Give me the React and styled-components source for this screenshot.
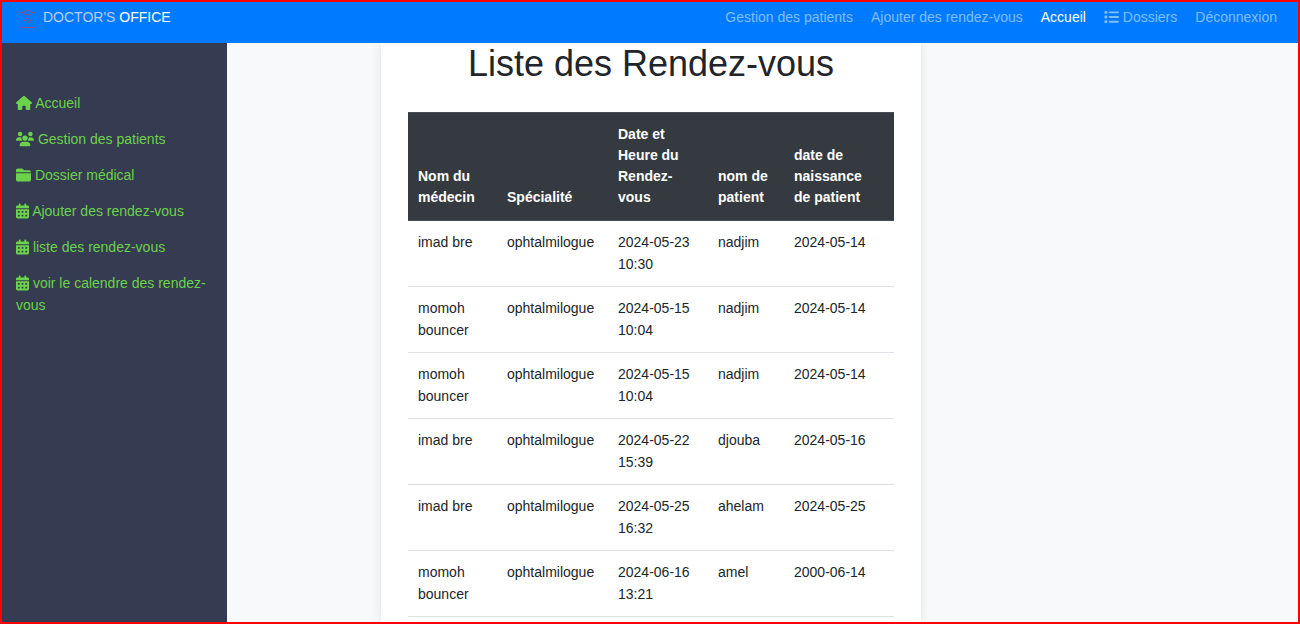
import React from "react";
import styled, { createGlobalStyle } from "styled-components";
import {
  FaHouse,
  FaUsers,
  FaFolderClosed,
  FaCalendarDays,
  FaList,
} from "react-icons/fa6";

const GlobalStyle = createGlobalStyle`
  *, *::before, *::after { box-sizing: border-box; }
  body {
    margin: 0;
    font-family: "Liberation Sans", Arial, sans-serif;
    font-size: 14px;
    line-height: 22px;
    color: #212529;
    background: #f8f9fa;
  }
`;

const Page = styled.div`
  display: flex;
  flex-direction: column;
  height: 100vh;
  border: 2px solid #ff0000;
  overflow: hidden;
`;

const Navbar = styled.header`
  display: flex;
  flex: none;
  justify-content: space-between;
  align-items: flex-start;
  padding: 4px 21px 15px 16px;
  background: #007bff;
`;

const Brand = styled.a`
  display: flex;
  align-items: center;
  gap: 7px;
  color: #ffffff;
  text-decoration: none;
`;

const BrandMuted = styled.span`
  color: #b9cdec;
`;

const NavLinks = styled.nav`
  display: flex;
  gap: 18px;
`;

const NavLink = styled.a`
  color: ${({ $active }) => ($active ? "#ffffff" : "rgba(255, 255, 255, 0.5)")};
  text-decoration: none;
  white-space: nowrap;
`;

const IconBox = styled.span`
  svg {
    width: ${({ $width }) => $width}px;
    height: 16px;
    vertical-align: -3px;
  }
`;

const Body = styled.div`
  display: grid;
  flex: 1;
  grid-template-columns: 225px 1fr 223px;
  min-height: 0;
`;

const Sidebar = styled.aside`
  padding-top: 42px;
  background: #353b50;
`;

const SideLink = styled.a`
  display: block;
  padding: 7px 14px;
  color: #6bd24b;
  text-decoration: none;
`;

const Main = styled.main`
  display: flex;
  justify-content: center;
  min-height: 0;
  overflow: hidden;
`;

const Card = styled.section`
  width: 100%;
  max-width: 540px;
  padding: 0 27px;
  background: #ffffff;
  box-shadow: 0 0 9px rgba(0, 0, 0, 0.1);
`;

const Title = styled.h1`
  margin: 0 0 27px;
  font-size: 36px;
  font-weight: 500;
  line-height: 42px;
  text-align: center;
`;

const Table = styled.table`
  width: 100%;
  table-layout: fixed;
  border-spacing: 0;
`;

const Column = styled.col`
  width: ${({ $width }) => $width};
`;

const HeadCell = styled.th`
  padding: 11px 14px 12px 10px;
  border: solid #454d55;
  border-width: 1px 0;
  background: #343a40;
  color: #ffffff;
  line-height: 21px;
  text-align: left;
  vertical-align: bottom;
`;

const Cell = styled.td`
  padding: 10px 10px 11px;
  border-bottom: 1px solid #dee2e6;
  vertical-align: top;
`;

const navLinks = [
  { label: "Gestion des patients" },
  { label: "Ajouter des rendez-vous" },
  { label: "Accueil", active: true },
  { label: "Dossiers", Icon: FaList, iconWidth: 15 },
  { label: "Déconnexion" },
];

const sideLinks = [
  { label: "Accueil", Icon: FaHouse, iconWidth: 16 },
  { label: "Gestion des patients", Icon: FaUsers, iconWidth: 18 },
  { label: "Dossier médical", Icon: FaFolderClosed, iconWidth: 15 },
  { label: "Ajouter des rendez-vous", Icon: FaCalendarDays, iconWidth: 13 },
  { label: "liste des rendez-vous", Icon: FaCalendarDays, iconWidth: 13 },
  { label: "voir le calendre des rendez-vous", Icon: FaCalendarDays, iconWidth: 13 },
];

const columns = [
  { label: "Nom du médecin", width: "89px" },
  { label: "Spécialité", width: "111px" },
  { label: "Date et Heure du Rendez-vous", width: "100px" },
  { label: "nom de patient", width: "76px" },
  { label: "date de naissance de patient", width: "auto" },
];

const appointments = [
  ["imad bre", "ophtalmilogue", "2024-05-23 10:30", "nadjim", "2024-05-14"],
  ["momoh bouncer", "ophtalmilogue", "2024-05-15 10:04", "nadjim", "2024-05-14"],
  ["momoh bouncer", "ophtalmilogue", "2024-05-15 10:04", "nadjim", "2024-05-14"],
  ["imad bre", "ophtalmilogue", "2024-05-22 15:39", "djouba", "2024-05-16"],
  ["imad bre", "ophtalmilogue", "2024-05-25 16:32", "ahelam", "2024-05-25"],
  ["momoh bouncer", "ophtalmilogue", "2024-06-16 13:21", "amel", "2000-06-14"],
];

function ClipboardLogo() {
  return (
    <svg
      width="18"
      height="22"
      viewBox="0 0 18 22"
      fill="none"
      stroke="#dc3545"
      strokeOpacity="0.65"
      strokeLinecap="round"
      strokeLinejoin="round"
      aria-hidden="true"
    >
      <path d="M5 6.5H2.5a1 1 0 0 0-1 1v13a1 1 0 0 0 1 1h14a1 1 0 0 0 1-1v-13a1 1 0 0 0-1-1H14" />
      <path d="M5 7c0-1 .8-1.500 2-1.500C7.300 4.700 8.300 4.500 9.500 4.500s2.200.2 2.500 1c1.200 0 2 .5 2 1.500-.4 1.200-1.200 1.800-2.500 1.800h-4C6.200 8.800 5.400 8.200 5 7z" />
      <path d="M5.500 14.500H7l1.500-2.500 2.500 4.500 1.200-2.500h1.300" />
    </svg>
  );
}

export default function App() {
  return (
    <>
      <GlobalStyle />
      <Page>
        <Navbar>
          <Brand href="#">
            <ClipboardLogo />
            <span>
              <BrandMuted>DOCTOR'S</BrandMuted> OFFICE
            </span>
          </Brand>
          <NavLinks>
            {navLinks.map(({ label, active, Icon, iconWidth }) => (
              <NavLink key={label} href="#" $active={active}>
                {Icon && (
                  <IconBox $width={iconWidth}>
                    <Icon preserveAspectRatio="xMidYMid meet" aria-hidden="true" />{" "}
                  </IconBox>
                )}
                {label}
              </NavLink>
            ))}
          </NavLinks>
        </Navbar>
        <Body>
          <Sidebar>
            <nav>
              {sideLinks.map(({ label, Icon, iconWidth }) => (
                <SideLink key={label} href="#">
                  <IconBox $width={iconWidth}>
                    <Icon aria-hidden="true" />
                  </IconBox>{" "}
                  {label}
                </SideLink>
              ))}
            </nav>
          </Sidebar>
          <Main>
            <Card>
              <Title>Liste des Rendez-vous</Title>
              <Table>
                <colgroup>
                  {columns.map(({ label, width }) => (
                    <Column key={label} $width={width} />
                  ))}
                </colgroup>
                <thead>
                  <tr>
                    {columns.map(({ label }) => (
                      <HeadCell key={label} scope="col">
                        {label}
                      </HeadCell>
                    ))}
                  </tr>
                </thead>
                <tbody>
                  {appointments.map((row, rowIndex) => (
                    <tr key={rowIndex}>
                      {row.map((value, index) => (
                        <Cell key={columns[index].label}>{value}</Cell>
                      ))}
                    </tr>
                  ))}
                </tbody>
              </Table>
            </Card>
          </Main>
        </Body>
      </Page>
    </>
  );
}
